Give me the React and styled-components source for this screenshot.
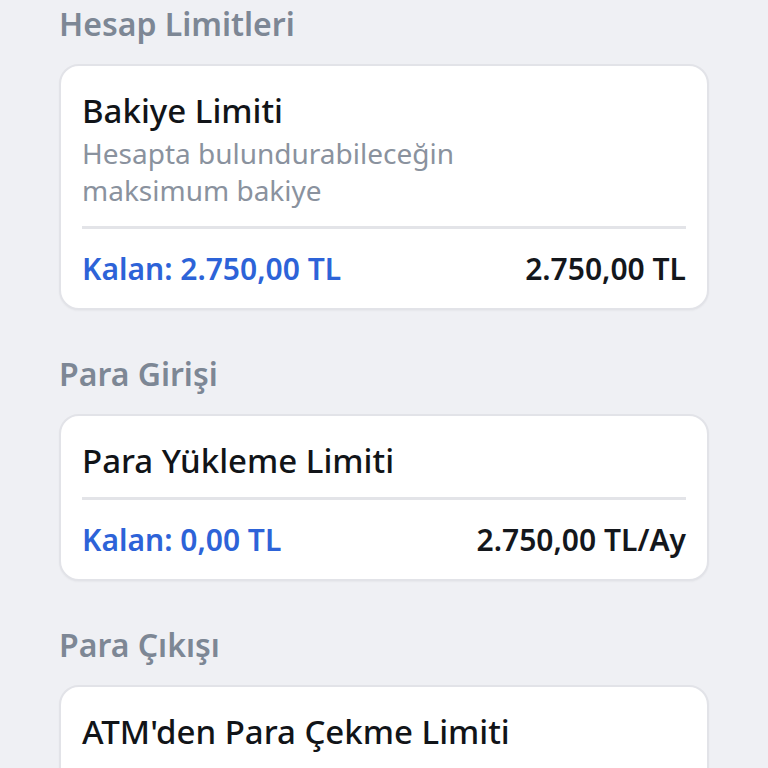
import React from 'react'
import styled, { createGlobalStyle } from 'styled-components'

const GlobalStyle = createGlobalStyle`
  html, body {
    margin: 0;
    padding: 0;
    background: #eff0f4;
  }
  body {
    font-family: "Noto Sans", "Liberation Sans", sans-serif;
    -webkit-font-smoothing: antialiased;
  }
`

// the last card runs past the bottom of the screen, so only its name shows
const sections = [
  {
    title: 'Hesap Limitleri',
    cards: [
      {
        name: 'Bakiye Limiti',
        desc: ['Hesapta bulundurabileceğin', 'maksimum bakiye'],
        left: 'Kalan: 2.750,00 TL',
        right: '2.750,00 TL',
      },
    ],
  },
  {
    title: 'Para Girişi',
    cards: [
      {
        name: 'Para Yükleme Limiti',
        left: 'Kalan: 0,00 TL',
        right: '2.750,00 TL/Ay',
      },
    ],
  },
  {
    title: 'Para Çıkışı',
    cards: [
      {
        name: "ATM'den Para Çekme Limiti",
      },
    ],
  },
]

function LimitCard({ card }) {
  return (
    <Card>
      <CardName>{card.name}</CardName>
      {card.desc && (
        <Desc>
          {card.desc.map((line) => (
            <span key={line}>{line}</span>
          ))}
        </Desc>
      )}
      <Divider />
      {card.left && (
        <Row>
          <Remaining>{card.left}</Remaining>
          <Amount>{card.right}</Amount>
        </Row>
      )}
    </Card>
  )
}

export default function App() {
  return (
    <>
      <GlobalStyle />
      <Page>
        {sections.map((s) => (
          <Section key={s.title}>
            <Heading>{s.title}</Heading>
            {s.cards.map((c) => (
              <LimitCard key={c.name} card={c} />
            ))}
          </Section>
        ))}
      </Page>
    </>
  )
}

const Page = styled.div`
  display: flex;
  flex-direction: column;
  gap: 45px;
  padding: 5px 59px 40px 59px;
  height: 768px;
  box-sizing: border-box;
  overflow: hidden;
`

const Section = styled.section`
  display: flex;
  flex-direction: column;
  gap: 21px;
`

const Heading = styled.h2`
  margin: 0;
  font-size: 32px;
  line-height: 38px;
  font-weight: 600;
  color: #7d8795;
`

const Card = styled.div`
  background: #ffffff;
  border: 2px solid #e2e3e8;
  border-radius: 20px;
  padding: 26px 21px 20px 21px;
  box-shadow: 0 1px 2px rgba(0, 0, 0, 0.04);
`

const CardName = styled.div`
  font-size: 33px;
  line-height: 38px;
  font-weight: 500;
  color: #111418;
`

const Desc = styled.div`
  display: flex;
  flex-direction: column;
  margin-top: 5px;
  font-size: 28px;
  line-height: 37px;
  color: #8a929e;
`

const Divider = styled.div`
  height: 3px;
  background: #e3e4e8;
  margin: 17px 0 21px 0;
`

const Row = styled.div`
  display: flex;
  justify-content: space-between;
  align-items: center;
  font-size: 30px;
  line-height: 38px;
  font-weight: 600;
`

const Remaining = styled.span`
  color: #2d63d8;
`

const Amount = styled.span`
  color: #14171c;
`
